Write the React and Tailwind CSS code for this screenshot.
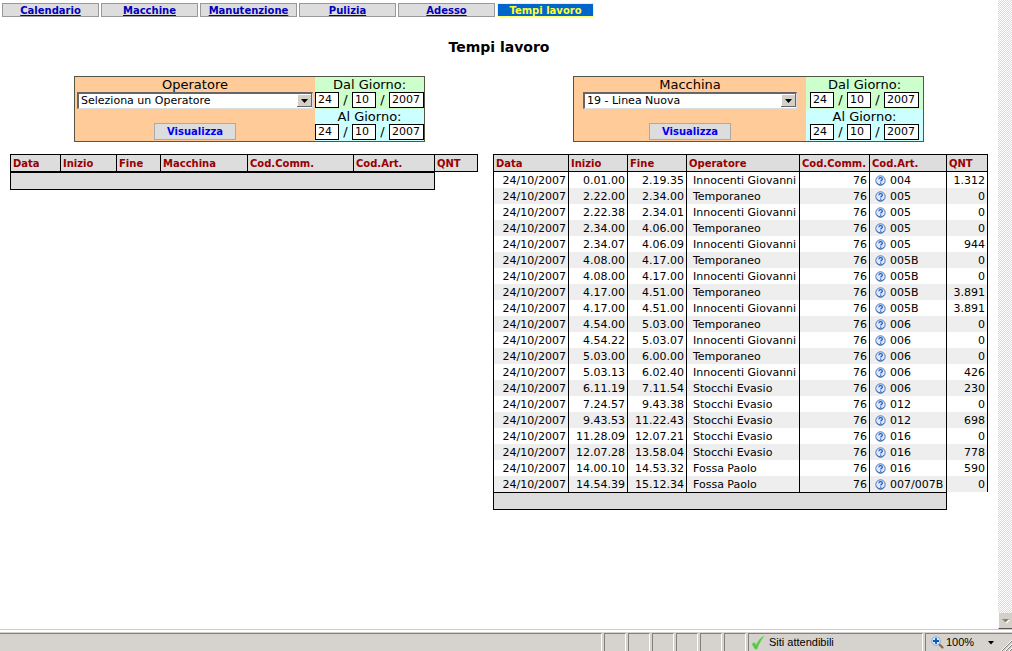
import { useState } from 'react'

const navItems = ['Calendario', 'Macchine', 'Manutenzione', 'Pulizia', 'Adesso', 'Tempi lavoro']

const operatorColumns = [
  { label: 'Data', width: 'w-[50px]' },
  { label: 'Inizio', width: 'w-[56px]' },
  { label: 'Fine', width: 'w-[44px]' },
  { label: 'Macchina', width: 'w-[87px]' },
  { label: 'Cod.Comm.', width: 'w-[106px]' },
  { label: 'Cod.Art.', width: 'w-[81px]' },
  { label: 'QNT', width: 'w-[44px]' },
]

const machineColumns = [
  { label: 'Data', width: 'w-[75px]' },
  { label: 'Inizio', width: 'w-[59px]' },
  { label: 'Fine', width: 'w-[59px]' },
  { label: 'Operatore', width: 'w-[113px]' },
  { label: 'Cod.Comm.', width: 'w-[70px]' },
  { label: 'Cod.Art.', width: 'w-[77px]' },
  { label: 'QNT', width: 'w-[42px]' },
]

const machineRows = [
  ['0.01.00', '2.19.35', 'Innocenti Giovanni', '004', '1.312'],
  ['2.22.00', '2.34.00', 'Temporaneo', '005', '0'],
  ['2.22.38', '2.34.01', 'Innocenti Giovanni', '005', '0'],
  ['2.34.00', '4.06.00', 'Temporaneo', '005', '0'],
  ['2.34.07', '4.06.09', 'Innocenti Giovanni', '005', '944'],
  ['4.08.00', '4.17.00', 'Temporaneo', '005B', '0'],
  ['4.08.00', '4.17.00', 'Innocenti Giovanni', '005B', '0'],
  ['4.17.00', '4.51.00', 'Temporaneo', '005B', '3.891'],
  ['4.17.00', '4.51.00', 'Innocenti Giovanni', '005B', '3.891'],
  ['4.54.00', '5.03.00', 'Temporaneo', '006', '0'],
  ['4.54.22', '5.03.07', 'Innocenti Giovanni', '006', '0'],
  ['5.03.00', '6.00.00', 'Temporaneo', '006', '0'],
  ['5.03.13', '6.02.40', 'Innocenti Giovanni', '006', '426'],
  ['6.11.19', '7.11.54', 'Stocchi Evasio', '006', '230'],
  ['7.24.57', '9.43.38', 'Stocchi Evasio', '012', '0'],
  ['9.43.53', '11.22.43', 'Stocchi Evasio', '012', '698'],
  ['11.28.09', '12.07.21', 'Stocchi Evasio', '016', '0'],
  ['12.07.28', '13.58.04', 'Stocchi Evasio', '016', '778'],
  ['14.00.10', '14.53.32', 'Fossa Paolo', '016', '590'],
  ['14.54.39', '15.12.34', 'Fossa Paolo', '007/007B', '0'],
].map(([start, end, operator, article, qty]) => ({
  date: '24/10/2007',
  start,
  end,
  operator,
  order: '76',
  article,
  qty,
}))

function HelpIcon() {
  return (
    <svg width="11" height="11" viewBox="0 0 11 11" className="shrink-0" aria-hidden="true">
      <circle cx="5.5" cy="5.5" r="4.7" fill="#dbe9fb" stroke="#4a78c0" />
      <path d="M1.6 7.5a4.4 4.4 0 0 0 7.6.4" fill="none" stroke="#2f5ba8" strokeWidth="1" />
      <path
        d="M3.8 4.2c.1-1.1.9-1.5 1.8-1.5s1.8.5 1.8 1.4c0 1.2-1.7 1.2-1.7 2.4M5.7 7.6v1.1"
        fill="none"
        stroke="#2a57b4"
        strokeWidth="1.2"
      />
    </svg>
  )
}

function NavBar() {
  return (
    <nav className="flex gap-[2px] pl-[2px] pt-[3px] text-[10px] font-bold leading-[12px]">
      {navItems.map((item) => {
        const active = item === 'Tempi lavoro'
        return (
          <a
            key={item}
            href="#"
            className={`h-[14px] w-[97px] border pt-px text-center ${
              active
                ? 'border-[#ffff66] bg-[#0066cc] text-[#ffff33]'
                : 'border-[#999999] bg-[#dddddd] text-[#0000bb] underline'
            }`}
          >
            {item}
          </a>
        )
      })}
    </nav>
  )
}

function DateRow({ id, label, color }) {
  const [date, setDate] = useState(['24', '10', '2007'])
  const update = (index) => (e) =>
    setDate(date.map((part, i) => (i === index ? e.target.value : part)))

  return (
    <div className={`flex-1 ${color}`}>
      <label htmlFor={id} className="block h-[15px] text-center leading-[16px]">
        {label}
      </label>
      <div className="flex h-[16px] justify-center">
        {date.map((part, i) => (
          <span key={i} className="flex">
            {i > 0 && <span className="w-[13px] text-center leading-[16px]">/</span>}
            <input
              id={i === 0 ? id : undefined}
              aria-label={i === 0 ? undefined : label}
              value={part}
              onChange={update(i)}
              className={`h-[16px] border border-black bg-white pl-[2px] pt-px text-[11px] ${
                i === 2 ? 'w-[35px]' : 'w-[24px]'
              }`}
            />
          </span>
        ))}
      </div>
    </div>
  )
}

function FilterForm({ id, label, options, selectWidth, dateWidth }) {
  return (
    <form
      onSubmit={(e) => e.preventDefault()}
      className="flex h-[66px] w-[351px] border border-[#555544] text-[13px]"
    >
      <div className="flex flex-1 flex-col items-center bg-[#ffcc99]">
        <label htmlFor={id} className="h-[15px] leading-[16px]">
          {label}
        </label>
        <div className={`relative ${selectWidth}`}>
          <select
            id={id}
            className="block h-[17px] w-full appearance-none border-l-2 border-t-2 border-b border-r border-[#666666] border-b-[#dddddd] border-r-[#dddddd] bg-white pl-[2px] text-[11px] leading-[14px]"
          >
            {options.map((option) => (
              <option key={option}>{option}</option>
            ))}
          </select>
          <svg
            className="pointer-events-none absolute right-[1px] top-[2px]"
            width="15"
            height="13"
            viewBox="0 0 15 13"
            aria-hidden="true"
          >
            <rect width="15" height="13" fill="#666" />
            <rect width="14" height="12" fill="#fff" />
            <rect x="1" y="1" width="13" height="11" fill="#d4d0c8" />
            <path d="M4 5h7L7.5 9z" fill="#000" />
          </svg>
        </div>
        <button
          type="submit"
          className="mt-auto mb-px h-[17px] w-[82px] border border-[#aaaaaa] bg-[#dddddd] text-[10px] font-bold leading-[15px] text-[#0000ee]"
        >
          Visualizza
        </button>
      </div>
      <div className={`flex flex-col ${dateWidth}`}>
        <DateRow id={`${id}-dal`} label="Dal Giorno:" color="bg-[#ccffcc]" />
        <DateRow id={`${id}-al`} label="Al Giorno:" color="bg-[#ccffff]" />
      </div>
    </form>
  )
}

function WorkTable({ columns, rows = [] }) {
  return (
    <table className="table-fixed border-separate border-spacing-0 self-start text-[11px] leading-[15px]">
      <thead>
        <tr className="h-[18px] text-left text-[10px] text-[#990000]">
          {columns.map((col) => (
            <th
              key={col.label}
              className={`${col.width} border-y border-l border-black bg-[#dddddd] p-0 pl-[2px] pt-px last:border-r`}
            >
              {col.label}
            </th>
          ))}
        </tr>
      </thead>
      <tbody>
        {rows.map((row) => (
          <tr
            key={`${row.start}-${row.operator}`}
            className="h-[16px] whitespace-nowrap text-right even:bg-[#eeeeee] *:border-l *:border-black *:p-0 *:pr-[2px] *:pt-px"
          >
            <td>{row.date}</td>
            <td>{row.start}</td>
            <td>{row.end}</td>
            <td>
              <div className="pl-[6px] text-left">{row.operator}</div>
            </td>
            <td>{row.order}</td>
            <td>
              <div className="flex items-center gap-1 pl-[5px]">
                <HelpIcon />
                {row.article}
              </div>
            </td>
            <td className="border-r">{row.qty}</td>
          </tr>
        ))}
      </tbody>
      <tfoot>
        <tr className="h-[18px]">
          <td colSpan={6} className="border border-r-0 border-black bg-[#dddddd] p-0" />
          <td className="border-l border-black p-0" />
        </tr>
      </tfoot>
    </table>
  )
}

function ScrollBar() {
  return (
    <div className="flex w-[14px] shrink-0 flex-col justify-end bg-[repeating-conic-gradient(#dcdad5_0_25%,#ffffff_0_50%)] bg-[size:2px_2px]">
      <button
        type="button"
        aria-label="Scorri"
        className="flex h-[16px] items-center justify-center border-b border-l border-b-[#555555] border-l-white bg-[#d4d0c8]"
      >
        <svg width="9" height="6" viewBox="0 0 9 6" aria-hidden="true">
          <path d="M2 2h7L5.500 5.500z" fill="#fff" />
          <path d="M1 1h7L4.500 4.500z" fill="#808080" />
        </svg>
      </button>
    </div>
  )
}

function StatusBar() {
  const panel = 'border-l border-t border-r border-[#808080] border-r-white'
  return (
    <footer className="border-t border-[#cccccc] bg-white pt-[2px] font-['Liberation_Sans',sans-serif] text-[11px]">
      <div className="flex h-[19px] gap-[2px] bg-[#d6d3ce] pt-px">
        <div className="flex-1 border-r border-t border-t-[#808080] border-r-white" />
        {[0, 1, 2, 3, 4, 5].map((i) => (
          <div key={i} className={`w-[22px] ${panel}`} />
        ))}
        <div className={`flex w-[175px] items-center gap-1 pl-[2px] ${panel}`}>
          <svg width="14" height="15" viewBox="0 0 14 15" aria-hidden="true">
            <path
              d="M1 9l2.500-1.500L5 10.500C7 6 9.500 3 13 1 10 5 7.500 9 6 14H4z"
              fill="#4fc63c"
              stroke="#6fd45c"
              strokeWidth=".8"
            />
          </svg>
          Siti attendibili
        </div>
        <div className="flex w-[87px] items-center border-l border-t border-[#808080] pl-[5px]">
          <svg width="13" height="13" viewBox="0 0 13 13" aria-hidden="true">
            <path d="M8 8l3.500 3.500" stroke="#8a6a48" strokeWidth="2.200" strokeLinecap="round" />
            <circle cx="5" cy="5" r="4.300" fill="#d4e9fb" stroke="#83aeda" />
            <path d="M5 2v6M2 5h6" stroke="#1555b0" strokeWidth="1.800" />
          </svg>
          <span className="ml-[2px]">100%</span>
          <svg className="ml-[14px]" width="6" height="4" viewBox="0 0 6 4" aria-hidden="true">
            <path d="M0 0h6L3 3.500z" fill="#000" />
          </svg>
          <svg className="ml-auto self-end" width="12" height="12" viewBox="0 0 12 12" aria-hidden="true">
            <path d="M1 12L12 1M5 12l7-7M9 12l3-3" stroke="#fff" />
            <path d="M2 12L12 2M6 12l6-6M10 12l2-2" stroke="#808080" />
          </svg>
        </div>
      </div>
    </footer>
  )
}

export default function App() {
  return (
    <div className="flex min-h-screen flex-col bg-white font-['DejaVu_Sans',sans-serif] text-black">
      <div className="flex flex-1">
        <main className="min-w-0 flex-1">
          <NavBar />
          <h1 className="mt-5 text-center text-[14px] font-bold leading-[20px]">Tempi lavoro</h1>
          <div className="mt-[19px] grid grid-cols-2 justify-items-center">
            <FilterForm
              id="operatore"
              label="Operatore"
              options={['Seleziona un Operatore']}
              selectWidth="w-[236px]"
              dateWidth="w-[109px]"
            />
            <FilterForm
              id="macchina"
              label="Macchina"
              options={['19 - Linea Nuova']}
              selectWidth="w-[214px]"
              dateWidth="w-[117px]"
            />
          </div>
          <div className="mt-3 flex justify-between px-[10px]">
            <WorkTable columns={operatorColumns} />
            <WorkTable columns={machineColumns} rows={machineRows} />
          </div>
        </main>
        <ScrollBar />
      </div>
      <StatusBar />
    </div>
  )
}
